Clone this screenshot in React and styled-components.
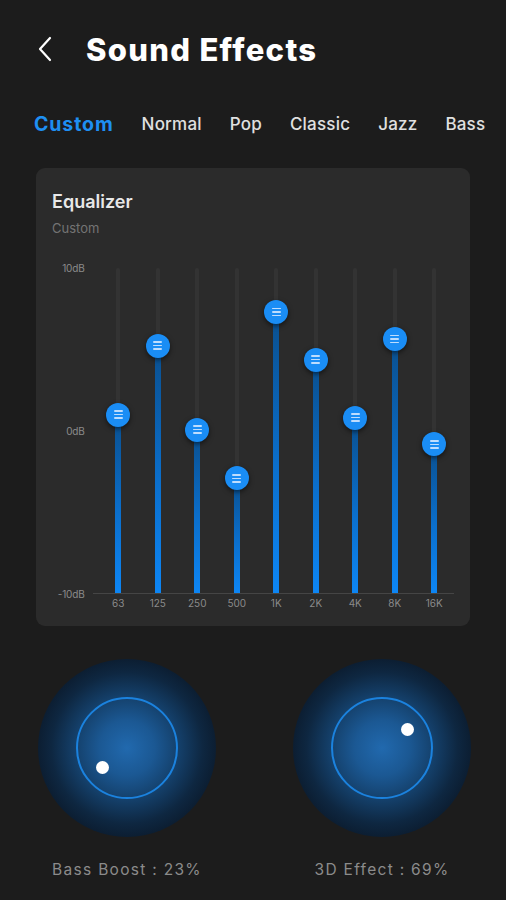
import React from "react";
import styled, { createGlobalStyle } from "styled-components";

const Global = createGlobalStyle`
  html, body { margin: 0; padding: 0; background: #1c1c1c; }
  body { font-family: "Inter", "Noto Sans", sans-serif; }
  * { box-sizing: border-box; }
`;

const Page = styled.div`
  width: 506px;
  height: 900px;
  background: #1c1c1c;
  display: flex;
  flex-direction: column;
  overflow: hidden;
`;

const Header = styled.div`
  display: flex;
  align-items: center;
  gap: 30px;
  padding: 28px 0 0 34px;
  height: 70px;
`;

const BackButton = styled.button`
  border: 0;
  background: none;
  padding: 0;
  width: 22px;
  height: 30px;
  display: flex;
  align-items: center;
  justify-content: center;
  color: #fff;
`;

const Title = styled.h1`
  margin: 0;
  font-family: "Inter", sans-serif;
  font-weight: 800;
  font-size: 31px;
  letter-spacing: 1.3px;
  color: #ffffff;
`;

const Tabs = styled.div`
  display: flex;
  align-items: center;
  gap: 28px;
  padding: 0 0 0 34px;
  margin-top: 34px;
  height: 40px;
`;

const Tab = styled.span`
  font-family: "Inter", sans-serif;
  font-weight: ${(p) => (p.$active ? 700 : 500)};
  font-size: ${(p) => (p.$active ? "19.5px" : "17px")};
  letter-spacing: ${(p) => (p.$active ? "0.9px" : "0.2px")};
  color: ${(p) => (p.$active ? "#1e8ff2" : "#e0e0e0")};
  white-space: nowrap;
`;

const Card = styled.section`
  margin: 24px 36px 0 36px;
  height: 458px;
  background: #2b2b2b;
  border-radius: 9px;
  padding: 23px 16px 0 16px;
  display: flex;
  flex-direction: column;
`;

const CardTitle = styled.div`
  font-family: "Inter", sans-serif;
  font-weight: 600;
  font-size: 18px;
  color: #e8e8e8;
`;

const CardSub = styled.div`
  font-family: "Inter", sans-serif;
  font-size: 13px;
  color: #747474;
  margin-top: 8px;
`;

const Chart = styled.div`
  margin-top: 32px;
  display: flex;
  height: 350px;
`;

const AxisLabels = styled.div`
  width: 41px;
  height: 326px;
  display: flex;
  flex-direction: column;
  justify-content: space-between;
  align-items: flex-end;
  padding-right: 8px;
`;

const AxisLabel = styled.span`
  font-family: "Inter", sans-serif;
  font-size: 10px;
  color: #8c8c8c;
  line-height: 0;
  letter-spacing: -0.2px;
`;

const Plot = styled.div`
  display: flex;
  flex-direction: column;
  width: 362px;
`;

const Bars = styled.div`
  display: grid;
  grid-template-columns: repeat(9, 39.5px);
  padding-left: 6px;
  height: 326px;
  border-bottom: 1px solid #454545;
`;

const FreqRow = styled.div`
  display: grid;
  grid-template-columns: repeat(9, 39.5px);
  padding-left: 6px;
  margin-top: 3px;
`;

const Freq = styled.span`
  text-align: center;
  font-family: "Inter", sans-serif;
  font-size: 10px;
  color: #8a8a8a;
`;

const Column = styled.div`
  display: flex;
  justify-content: center;
  height: 100%;
`;

const Track = styled.div`
  position: relative;
  width: 4px;
  height: 100%;
  background: #333333;
  border-radius: 2px;
`;

const Fill = styled.div`
  position: absolute;
  left: -1px;
  bottom: 0;
  width: 6px;
  background: linear-gradient(to top, #0d86f5 0%, #0b6fcc 45%, #0a4f8e 100%);
`;

const Thumb = styled.div`
  position: absolute;
  left: 50%;
  width: 24px;
  height: 24px;
  margin-left: -12px;
  margin-bottom: -12px;
  border-radius: 50%;
  background: #1a8df5;
  box-shadow: 0 2px 5px rgba(0, 0, 0, 0.55);
  display: flex;
  flex-direction: column;
  align-items: center;
  justify-content: center;
  gap: 2px;
`;

const Grip = styled.span`
  width: 9px;
  height: 1.5px;
  background: rgba(220, 235, 255, 0.85);
  border-radius: 1px;
`;

const Knobs = styled.div`
  display: flex;
  justify-content: space-between;
  padding: 0 35px 0 38px;
  margin-top: 33px;
`;

const KnobBlock = styled.div`
  display: flex;
  flex-direction: column;
  align-items: center;
  width: 178px;
`;

const KnobOuter = styled.div`
  position: relative;
  width: 178px;
  height: 178px;
  border-radius: 50%;
  background: radial-gradient(
    circle,
    #2169ae 0%,
    #1b5893 22%,
    #143f69 42%,
    #0e2741 60%,
    #0a1625 80%,
    #07090d 100%
  );
  display: flex;
  align-items: center;
  justify-content: center;
`;

const KnobRing = styled.div`
  width: 102px;
  height: 102px;
  border-radius: 50%;
  border: 2px solid #1b82de;
`;

const KnobDot = styled.div`
  position: absolute;
  width: 13px;
  height: 13px;
  border-radius: 50%;
  background: #ffffff;
  margin: -6.5px 0 0 -6.5px;
`;

const KnobLabel = styled.div`
  margin-top: 23px;
  font-family: "Inter", sans-serif;
  font-size: 15.5px;
  letter-spacing: 1.3px;
  color: #8b8b8b;
  white-space: nowrap;
`;

const bands = [
  { f: "63", v: 0.549 },
  { f: "125", v: 0.761 },
  { f: "250", v: 0.503 },
  { f: "500", v: 0.353 },
  { f: "1K", v: 0.865 },
  { f: "2K", v: 0.718 },
  { f: "4K", v: 0.54 },
  { f: "8K", v: 0.782 },
  { f: "16K", v: 0.457 },
];

const tabs = ["Custom", "Normal", "Pop", "Classic", "Jazz", "Bass"];

function Knob({ label, dotX, dotY }) {
  return (
    <KnobBlock>
      <KnobOuter>
        <KnobRing />
        <KnobDot style={{ left: dotX, top: dotY }} />
      </KnobOuter>
      <KnobLabel>{label}</KnobLabel>
    </KnobBlock>
  );
}

export default function App() {
  return (
    <Page>
      <Global />
      <Header>
        <BackButton aria-label="back">
          <svg width="16" height="26" viewBox="0 0 16 26" fill="none">
            <polyline
              points="13,2 3,13 13,24"
              stroke="#ffffff"
              strokeWidth="2.2"
              strokeLinecap="round"
              strokeLinejoin="round"
            />
          </svg>
        </BackButton>
        <Title>Sound Effects</Title>
      </Header>
      <Tabs>
        {tabs.map((t, i) => (
          <Tab key={t} $active={i === 0}>
            {t}
          </Tab>
        ))}
      </Tabs>
      <Card>
        <CardTitle>Equalizer</CardTitle>
        <CardSub>Custom</CardSub>
        <Chart>
          <AxisLabels>
            <AxisLabel>10dB</AxisLabel>
            <AxisLabel>0dB</AxisLabel>
            <AxisLabel>-10dB</AxisLabel>
          </AxisLabels>
          <Plot>
            <Bars>
              {bands.map((b) => (
                <Column key={b.f}>
                  <Track>
                    <Fill style={{ height: `${b.v * 100}%` }} />
                    <Thumb style={{ bottom: `${b.v * 100}%` }}>
                      <Grip />
                      <Grip />
                      <Grip />
                    </Thumb>
                  </Track>
                </Column>
              ))}
            </Bars>
            <FreqRow>
              {bands.map((b) => (
                <Freq key={b.f}>{b.f}</Freq>
              ))}
            </FreqRow>
          </Plot>
        </Chart>
      </Card>
      <Knobs>
        <Knob label="Bass Boost : 23%" dotX={64} dotY={108} />
        <Knob label="3D Effect : 69%" dotX={114} dotY={70} />
      </Knobs>
    </Page>
  );
}
